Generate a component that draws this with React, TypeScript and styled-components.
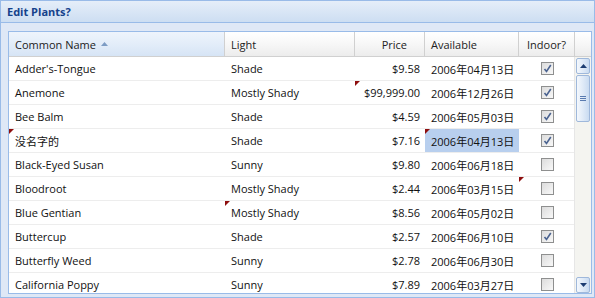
import styled, { createGlobalStyle } from "styled-components";

const GlobalStyle = createGlobalStyle`
  html, body {
    margin: 0;
    padding: 0;
    background: #ffffff;
  }
  body {
    font-family: "Open Sans", "Noto Sans CJK SC", sans-serif;
    font-size: 11px;
    color: #111;
  }
`;

const COLS = "216px 130px 70px 94px 56px";

interface IPlant {
  name: string;
  light: string;
  price: string;
  available: string;
  indoor: boolean;
  dirty?: string[];
  selected?: string;
}

const plants: IPlant[] = [
  { name: "Adder's-Tongue", light: "Shade", price: "$9.58", available: "2006年04月13日", indoor: true },
  { name: "Anemone", light: "Mostly Shady", price: "$99,999.00", available: "2006年12月26日", indoor: true, dirty: ["price"] },
  { name: "Bee Balm", light: "Shade", price: "$4.59", available: "2006年05月03日", indoor: true },
  { name: "没名字的", light: "Shade", price: "$7.16", available: "2006年04月13日", indoor: true, dirty: ["name", "available"], selected: "available" },
  { name: "Black-Eyed Susan", light: "Sunny", price: "$9.80", available: "2006年06月18日", indoor: false },
  { name: "Bloodroot", light: "Mostly Shady", price: "$2.44", available: "2006年03月15日", indoor: false, dirty: ["indoor"] },
  { name: "Blue Gentian", light: "Mostly Shady", price: "$8.56", available: "2006年05月02日", indoor: false, dirty: ["light"] },
  { name: "Buttercup", light: "Shade", price: "$2.57", available: "2006年06月10日", indoor: true },
  { name: "Butterfly Weed", light: "Sunny", price: "$2.78", available: "2006年06月30日", indoor: false },
  { name: "California Poppy", light: "Sunny", price: "$7.89", available: "2006年03月27日", indoor: false },
];

const Panel = styled.div`
  width: 595px;
  height: 298px;
  box-sizing: border-box;
  border: 1px solid #99bbe8;
  background: #dfe8f6;
  display: flex;
  flex-direction: column;
  overflow: hidden;
`;

const TitleBar = styled.div`
  height: 21px;
  flex: none;
  display: flex;
  align-items: center;
  padding-left: 6px;
  background: linear-gradient(#e5eef9, #cddef2);
  border-bottom: 1px solid #99bbe8;
  color: #15428b;
  font-weight: 700;
  font-size: 11px;
`;

const PanelBody = styled.div`
  flex: 1;
  min-height: 0;
  display: flex;
  padding: 8px 2px 3px 7px;
`;

const Grid = styled.div`
  flex: 1;
  display: flex;
  flex-direction: column;
  border: 1px solid #99bbe8;
  background: #fff;
  overflow: hidden;
`;

const HeaderRow = styled.div`
  display: grid;
  grid-template-columns: ${COLS} 1fr;
  height: 24px;
  flex: none;
  border-bottom: 1px solid #d0d0d0;
  background: linear-gradient(#ffffff 0%, #f7f7f7 50%, #ececec 100%);
`;

const HeaderCell = styled.div<{ $align?: string; $sorted?: boolean }>`
  display: flex;
  align-items: center;
  justify-content: ${(p) =>
    p.$align === "right" ? "flex-end" : p.$align === "center" ? "center" : "flex-start"};
  gap: 5px;
  padding: 0 ${(p) => (p.$align === "right" ? "17px" : "6px")} 0 6px;
  border-right: 1px solid #d0d0d0;
  color: #222;
  white-space: nowrap;
  background: ${(p) =>
    p.$sorted ? "linear-gradient(#eef4fc 0%, #e3edf9 50%, #d6e4f5 100%)" : "transparent"};
  &:last-child {
    border-right: none;
  }
`;

const BodyArea = styled.div`
  flex: 1;
  min-height: 0;
  display: flex;
`;

const Rows = styled.div`
  flex: 1;
  overflow: hidden;
`;

const Row = styled.div`
  display: grid;
  grid-template-columns: ${COLS};
  height: 23px;
  border-bottom: 1px solid #ededed;
`;

const Cell = styled.div<{ $align?: string; $dirty?: boolean; $selected?: boolean }>`
  position: relative;
  display: flex;
  align-items: center;
  justify-content: ${(p) =>
    p.$align === "right" ? "flex-end" : p.$align === "center" ? "center" : "flex-start"};
  padding: 0 5px 0 6px;
  white-space: nowrap;
  overflow: hidden;
  background: ${(p) => (p.$selected ? "#b8cfee" : "transparent")};
  &::before {
    content: "";
    display: ${(p) => (p.$dirty ? "block" : "none")};
    position: absolute;
    top: 0;
    left: 0;
    border-top: 5px solid #8e0e0e;
    border-right: 5px solid transparent;
  }
`;

const CheckBox = styled.span`
  width: 11px;
  height: 11px;
  border: 1px solid #8e8f8f;
  background: linear-gradient(135deg, #dcdcdc, #f8f8f8);
  display: flex;
  align-items: center;
  justify-content: center;
  margin-top: -1px;
`;

const ScrollBar = styled.div`
  width: 16px;
  flex: none;
  display: flex;
  flex-direction: column;
  align-items: center;
  background: #f4f4f0;
  border-left: 1px solid #e6e6e6;
`;

const ScrollButton = styled.div<{ $grow?: boolean }>`
  width: 12px;
  height: ${(p) => (p.$grow ? "45px" : "14px")};
  margin-top: 1px;
  border: 1px solid #9fb8db;
  border-radius: 2px;
  background: linear-gradient(90deg, #f4f8fd, #dbe7f6 60%, #c9dbf1);
  display: flex;
  align-items: center;
  justify-content: center;
  flex: none;
`;

const Track = styled.div`
  flex: 1;
`;

function Check() {
  return (
    <svg width="9" height="9" viewBox="0 0 9 9">
      <path d="M1.5 5 L3.5 7.5 L7.8 1" fill="none" stroke="#4b6390" strokeWidth="1.6" />
    </svg>
  );
}

function Arrow({ down }: { down?: boolean }) {
  return (
    <svg width="7" height="4" viewBox="0 0 7 4">
      <path d={down ? "M0 0 L7 0 L3.5 4 Z" : "M0 4 L7 4 L3.5 0 Z"} fill="#1d3d72" />
    </svg>
  );
}

function App() {
  return (
    <>
      <GlobalStyle />
      <Panel>
        <TitleBar>Edit Plants?</TitleBar>
        <PanelBody>
          <Grid>
            <HeaderRow>
              <HeaderCell $sorted>
                Common Name
                <svg width="7" height="4" viewBox="0 0 7 4">
                  <path d="M0 4 L7 4 L3.5 0 Z" fill="#7d9cc4" />
                </svg>
              </HeaderCell>
              <HeaderCell>Light</HeaderCell>
              <HeaderCell $align="right">Price</HeaderCell>
              <HeaderCell>Available</HeaderCell>
              <HeaderCell $align="center">Indoor?</HeaderCell>
              <HeaderCell />
            </HeaderRow>
            <BodyArea>
              <Rows>
                {plants.map((p) => {
                  const d = p.dirty || [];
                  return (
                    <Row key={p.name}>
                      <Cell $dirty={d.includes("name")}>{p.name}</Cell>
                      <Cell $dirty={d.includes("light")}>{p.light}</Cell>
                      <Cell $align="right" $dirty={d.includes("price")}>
                        {p.price}
                      </Cell>
                      <Cell
                        $dirty={d.includes("available")}
                        $selected={p.selected === "available"}
                      >
                        {p.available}
                      </Cell>
                      <Cell $align="center" $dirty={d.includes("indoor")}>
                        <CheckBox>{p.indoor && <Check />}</CheckBox>
                      </Cell>
                    </Row>
                  );
                })}
              </Rows>
              <ScrollBar>
                <ScrollButton>
                  <Arrow />
                </ScrollButton>
                <ScrollButton $grow>
                  <svg width="6" height="5" viewBox="0 0 6 5">
                    <path d="M0 0.5 H6 M0 2.5 H6 M0 4.5 H6" stroke="#5a7bb0" strokeWidth="1" />
                  </svg>
                </ScrollButton>
                <Track />
                <ScrollButton>
                  <Arrow down />
                </ScrollButton>
              </ScrollBar>
            </BodyArea>
          </Grid>
        </PanelBody>
      </Panel>
    </>
  );
}

export default App;
